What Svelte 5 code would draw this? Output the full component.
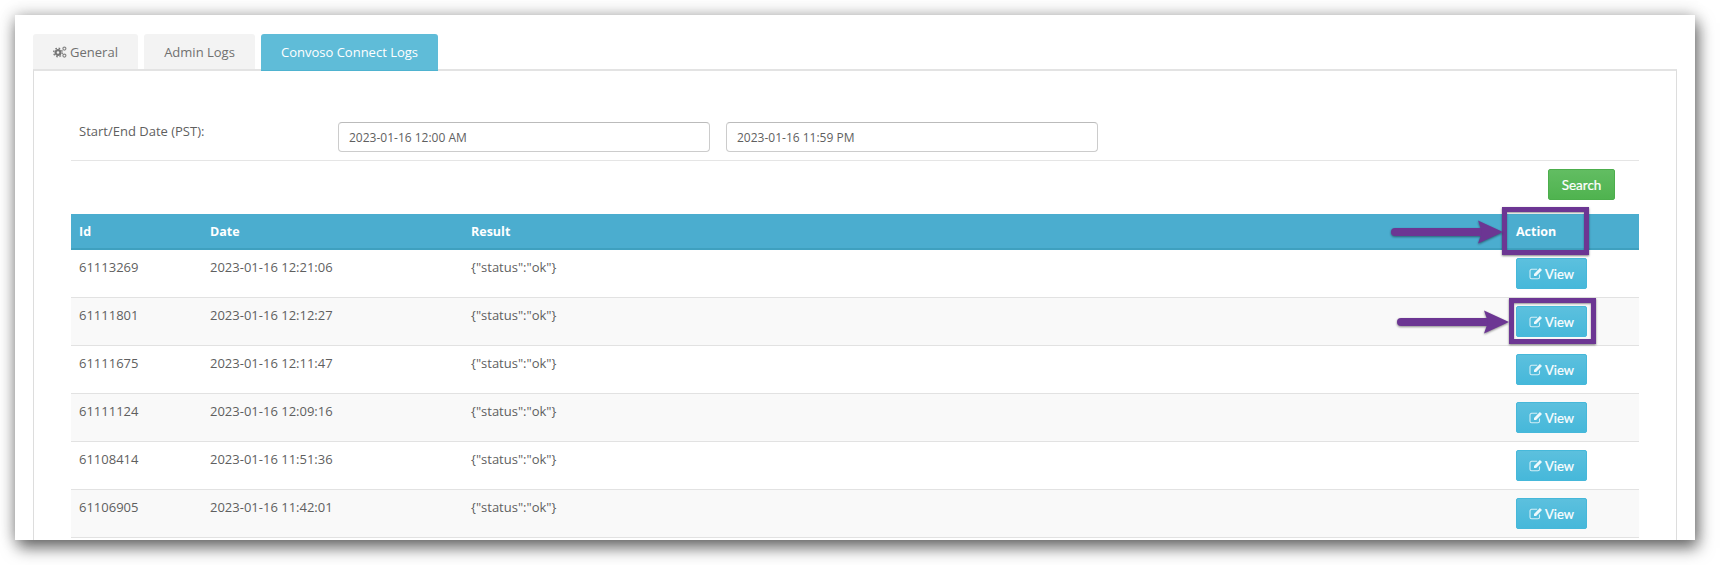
<script>
  const rows = [
    { id: '61113269', date: '2023-01-16 12:21:06' },
    { id: '61111801', date: '2023-01-16 12:12:27' },
    { id: '61111675', date: '2023-01-16 12:11:47' },
    { id: '61111124', date: '2023-01-16 12:09:16' },
    { id: '61108414', date: '2023-01-16 11:51:36' },
    { id: '61106905', date: '2023-01-16 11:42:01' },
  ];
</script>

<div class="page">
  <div class="window">
    <div class="tabs">
      <button class="tab general">
        <svg class="gears" viewBox="0 0 14 12" width="14" height="12">
          <circle cx="5" cy="6.5" r="2.4" fill="none" stroke="#777" stroke-width="2.2" />
          <circle cx="5" cy="6.500" r="4.300" fill="none" stroke="#777" stroke-width="1.300" stroke-dasharray="1.600 1.800" />
          <circle cx="11.400" cy="2.600" r="1.500" fill="none" stroke="#888" stroke-width="1.200" />
          <circle cx="11.400" cy="9.600" r="1.500" fill="none" stroke="#888" stroke-width="1.200" />
        </svg>
        General
      </button>
      <button class="tab admin">Admin Logs</button>
      <button class="tab active">Convoso Connect Logs</button>
    </div>

    <div class="panel">
      <div class="filter">
        <div class="filter-label">Start/End Date (PST):</div>
        <input class="date-input" type="text" value="2023-01-16 12:00 AM" />
        <input class="date-input" type="text" value="2023-01-16 11:59 PM" />
      </div>
      <div class="search-row">
        <button class="search">Search</button>
      </div>

      <table>
        <colgroup>
          <col style="width: 131px" />
          <col style="width: 261px" />
          <col />
          <col style="width: 131px" />
        </colgroup>
        <thead>
          <tr>
            <th>Id</th>
            <th>Date</th>
            <th>Result</th>
            <th>Action</th>
          </tr>
        </thead>
        <tbody>
          {#each rows as row}
            <tr>
              <td>{row.id}</td>
              <td>{row.date}</td>
              <td>{'{"status":"ok"}'}</td>
              <td>
                <button class="view">
                  <svg viewBox="0 0 14 13" width="14" height="13">
                    <path d="M10.500 7.600v2.600a1.600 1.600 0 0 1-1.600 1.600H2.600A1.600 1.600 0 0 1 1 10.200V3.900a1.600 1.600 0 0 1 1.600-1.600h5.600" fill="none" stroke="#fff" stroke-opacity=".75" stroke-width="1.100" />
                    <path d="M5 6.900 10.900 1l2.100 2.100-5.900 5.900H5z" fill="#fff" fill-opacity=".9" />
                  </svg>
                  View
                </button>
              </td>
            </tr>
          {/each}
        </tbody>
      </table>
    </div>

    <!-- callouts drawn on top of the screenshot -->
    <div class="callout box-action"></div>
    <div class="callout box-view"></div>
    <svg class="arrow arrow-action" width="114" height="26" viewBox="0 0 114 26">
      <path d="M4 13H92" stroke="#6c3693" stroke-width="8" stroke-linecap="round" />
      <path d="M87 1.500 112 13 87 24.500 91 13z" fill="#6c3693" />
    </svg>
    <svg class="arrow arrow-view" width="114" height="26" viewBox="0 0 114 26">
      <path d="M4 13H92" stroke="#6c3693" stroke-width="8" stroke-linecap="round" />
      <path d="M87 1.500 112 13 87 24.500 91 13z" fill="#6c3693" />
    </svg>
  </div>
</div>

<style>
  :global(body) {
    margin: 0;
    background: #fff;
  }

  .page {
    padding: 15px 25px 25px 15px;
    height: 565px;
    box-sizing: border-box;
    overflow: hidden;
  }

  .window {
    position: relative;
    width: 1680px;
    height: 525px;
    padding: 19px 18px 0;
    box-sizing: border-box;
    background: #fff;
    overflow: hidden;
    font-family: 'Open Sans', sans-serif;
    font-size: 13px;
    color: #5f5f5f;
    box-shadow: 3px 8px 15px rgba(0, 0, 0, 0.55), -1px -1px 15px rgba(0, 0, 0, 0.22);
  }

  .tabs {
    display: flex;
    gap: 6px;
    height: 36px;
    position: relative;
    z-index: 1;
  }

  .tab {
    border: 0;
    border-radius: 3px 3px 0 0;
    height: 35px;
    padding: 0;
    background: #f3f3f3;
    color: #707070;
    font: inherit;
    display: flex;
    align-items: center;
    justify-content: center;
    gap: 3px;
  }

  .general { width: 105px; }
  .admin { width: 111px; }

  .tab.active {
    width: 177px;
    height: 37px;
    background: #5fbcd8;
    color: #fff;
    border-bottom: 1px solid #4fb3d0;
    box-sizing: border-box;
  }

  .gears {
    margin-top: 1px;
  }

  .panel {
    border: 1px solid #ddd;
    border-top: 2px solid #e3e3e3;
    height: 480px;
    box-sizing: border-box;
    padding: 51px 37px 0;
    margin-top: -1px;
  }

  .filter {
    display: flex;
    align-items: flex-start;
    height: 38px;
    border-bottom: 1px solid #e5e5e5;
  }

  .filter-label {
    width: 267px;
    padding-left: 8px;
    box-sizing: border-box;
    line-height: 18px;
  }

  .date-input {
    width: 372px;
    height: 30px;
    margin-right: 16px;
    padding: 0 10px;
    box-sizing: border-box;
    border: 1px solid #ccc;
    border-top-color: #bbb;
    border-radius: 4px;
    font-family: inherit;
    font-size: 12px;
    color: #5f5f5f;
    background: #fff;
  }

  .search-row {
    display: flex;
    justify-content: flex-end;
    padding: 8px 24px 0 0;
    height: 45px;
    box-sizing: border-box;
  }

  .search {
    width: 67px;
    height: 31px;
    border: 1px solid #4cae4c;
    border-radius: 2px;
    background: linear-gradient(#62bd62, #4fb34f);
    color: #fff;
    font-family: Lato, sans-serif;
    font-size: 13.500px;
    -webkit-text-stroke: 0.2px #fff;
    padding: 0;
  }

  table {
    width: 1568px;
    margin-top: 8px;
    border-collapse: collapse;
    table-layout: fixed;
  }

  th {
    height: 35px;
    padding: 0 8px;
    background: #4badcf;
    border-bottom: 2px solid #3fa0bf;
    box-sizing: border-box;
    color: #fff;
    text-align: left;
    font-size: 12.500px;
    font-weight: 700;
  }

  td {
    height: 48px;
    padding: 8px;
    box-sizing: border-box;
    vertical-align: top;
    line-height: 19px;
    border-bottom: 1px solid #e2e2e2;
  }

  tbody tr:nth-child(even) {
    background: #f9f9f9;
  }

  .view {
    display: flex;
    align-items: center;
    justify-content: center;
    gap: 2px;
    width: 71px;
    height: 31px;
    padding: 0;
    border: 1px solid #46b8da;
    border-radius: 2px;
    background: linear-gradient(#5cc0de, #46b8da);
    color: #fff;
    font-family: Lato, sans-serif;
    font-size: 13px;
    -webkit-text-stroke: 0.2px #fff;
  }

  .callout {
    position: absolute;
    border: 5px solid #6c3693;
    box-sizing: border-box;
    box-shadow: 0 1px 2px rgba(0, 0, 0, 0.5), inset 0 1px 2px rgba(0, 0, 0, 0.4);
  }

  .box-action {
    left: 1487px;
    top: 192px;
    width: 87px;
    height: 48px;
  }

  .box-view {
    left: 1494px;
    top: 283px;
    width: 87px;
    height: 46px;
  }

  .arrow {
    position: absolute;
    filter: drop-shadow(0 1px 1px rgba(0, 0, 0, 0.45));
  }

  .arrow-action {
    left: 1376px;
    top: 204px;
  }

  .arrow-view {
    left: 1382px;
    top: 294px;
  }
</style>
